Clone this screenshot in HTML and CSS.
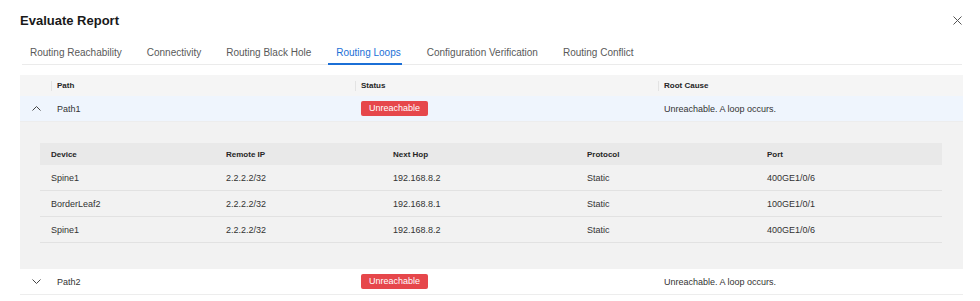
FILE: index.html
```html
<!DOCTYPE html>
<html lang="en">
<head>
  <meta charset="UTF-8">
  <title>Evaluate Report</title>
  <link rel="stylesheet" href="styles.css">
</head>
<body>
  <div class="dialog">
    <div class="dialogHead">
      <h1 class="dialogTitle">Evaluate Report</h1>
      <span class="btClose">
        <svg width="9" height="9" viewBox="0 0 9 9"><path d="M0.5 0.5 L8.5 8.5 M8.5 0.5 L0.5 8.5" stroke="#555" stroke-width="1" fill="none"/></svg>
      </span>
    </div>

    <div class="tabs">
      <span class="tab">Routing Reachability</span>
      <span class="tab">Connectivity</span>
      <span class="tab">Routing Black Hole</span>
      <span class="tab tabAtivo">Routing Loops</span>
      <span class="tab">Configuration Verification</span>
      <span class="tab">Routing Conflict</span>
    </div>

    <table class="tabelaPaths">
      <colgroup>
        <col style="width: 31px">
        <col style="width: 304px">
        <col style="width: 303px">
        <col>
      </colgroup>
      <thead>
        <tr>
          <th></th>
          <th class="sep">Path</th>
          <th class="sep">Status</th>
          <th class="sep">Root Cause</th>
        </tr>
      </thead>
      <tbody>
        <tr class="linhaAberta">
          <td class="seta">
            <svg width="9" height="5" viewBox="0 0 9 5"><path d="M0.5 4.5 L4.5 0.5 L8.5 4.5" stroke="#444" stroke-width="1" fill="none"/></svg>
          </td>
          <td>Path1</td>
          <td><span class="badge">Unreachable</span></td>
          <td>Unreachable. A loop occurs.</td>
        </tr>
        <tr class="linhaDetalhe">
          <td colspan="4">
            <table class="tabelaHops">
              <colgroup>
                <col style="width: 175px">
                <col style="width: 167px">
                <col style="width: 194px">
                <col style="width: 180px">
                <col>
              </colgroup>
              <thead>
                <tr>
                  <th>Device</th>
                  <th>Remote IP</th>
                  <th>Next Hop</th>
                  <th>Protocol</th>
                  <th>Port</th>
                </tr>
              </thead>
              <tbody>
                <tr>
                  <td>Spine1</td>
                  <td>2.2.2.2/32</td>
                  <td>192.168.8.2</td>
                  <td>Static</td>
                  <td>400GE1/0/6</td>
                </tr>
                <tr>
                  <td>BorderLeaf2</td>
                  <td>2.2.2.2/32</td>
                  <td>192.168.8.1</td>
                  <td>Static</td>
                  <td>100GE1/0/1</td>
                </tr>
                <tr>
                  <td>Spine1</td>
                  <td>2.2.2.2/32</td>
                  <td>192.168.8.2</td>
                  <td>Static</td>
                  <td>400GE1/0/6</td>
                </tr>
              </tbody>
            </table>
          </td>
        </tr>
        <tr>
          <td class="seta">
            <svg width="9" height="5" viewBox="0 0 9 5"><path d="M0.5 0.5 L4.5 4.5 L8.5 0.5" stroke="#444" stroke-width="1" fill="none"/></svg>
          </td>
          <td>Path2</td>
          <td><span class="badge">Unreachable</span></td>
          <td>Unreachable. A loop occurs.</td>
        </tr>
      </tbody>
    </table>
  </div>
</body>
</html>
```

FILE: styles.css
```css
body {
  margin: 0;
  padding: 0;
  background-color: #ffffff;
  color: #333333;
  font-family: "Liberation Sans", Arial, Helvetica, sans-serif;
  font-size: 9px;
}

.dialog {
  padding: 0 18px 0 20px;
}

.dialogHead {
  display: flex;
  justify-content: space-between;
  align-items: center;
  height: 41px;
}

.dialogTitle {
  margin: 0;
  font-size: 13px;
  line-height: 16px;
  font-weight: bold;
  color: #191919;
}

.btClose {
  display: flex;
  margin-right: 0;
}

.tabs {
  display: flex;
  gap: 17px;
  margin-left: 2px;
  border-bottom: 1px solid #ebebeb;
  margin-bottom: 10px;
}

.tab {
  padding: 6px 0 4px 8px;
  font-size: 10px;
  line-height: 12px;
  color: #595959;
  border-bottom: 2px solid transparent;
  margin-bottom: -1px;
}

.tabAtivo {
  color: #1b6fd6;
  border-bottom-color: #1b6fd6;
  padding-right: 1px;
}

table {
  border-collapse: collapse;
  table-layout: fixed;
  width: 100%;
}

.tabelaPaths {
  width: 943px;
}

.tabelaPaths th {
  position: relative;
  height: 21px;
  padding: 0 6px;
  text-align: left;
  font-size: 8px;
  font-weight: bold;
  color: #262626;
  background-color: #f5f5f5;
}

.tabelaPaths th.sep::before {
  content: "";
  position: absolute;
  left: 0;
  top: 6px;
  bottom: 5px;
  border-left: 1px solid #e3e3e3;
}

.tabelaPaths > tbody > tr > td {
  height: 25px;
  padding: 0 6px;
  border-bottom: 1px solid #ededed;
  color: #333333;
}

.tabelaPaths td.seta {
  padding: 0 0 0 12px;
}

.seta svg {
  display: block;
}

.linhaAberta > td {
  background-color: #eff5fd;
}

.linhaDetalhe > td {
  background-color: #f2f2f2;
  padding: 21px 21px 26px 20px !important;
  border-bottom: none !important;
}

.badge {
  display: inline-block;
  background-color: #e6474b;
  color: #ffffff;
  border-radius: 2px;
  padding: 0 8px;
  line-height: 15px;
  font-size: 9px;
}

.tabelaHops th {
  height: 22px;
  padding: 0 11px;
  text-align: left;
  font-size: 8px;
  font-weight: bold;
  color: #262626;
  background-color: #e9e9e9;
}

.tabelaHops td {
  height: 25px;
  padding: 0 11px;
  border-bottom: 1px solid #e2e2e2;
  color: #333333;
}
```
